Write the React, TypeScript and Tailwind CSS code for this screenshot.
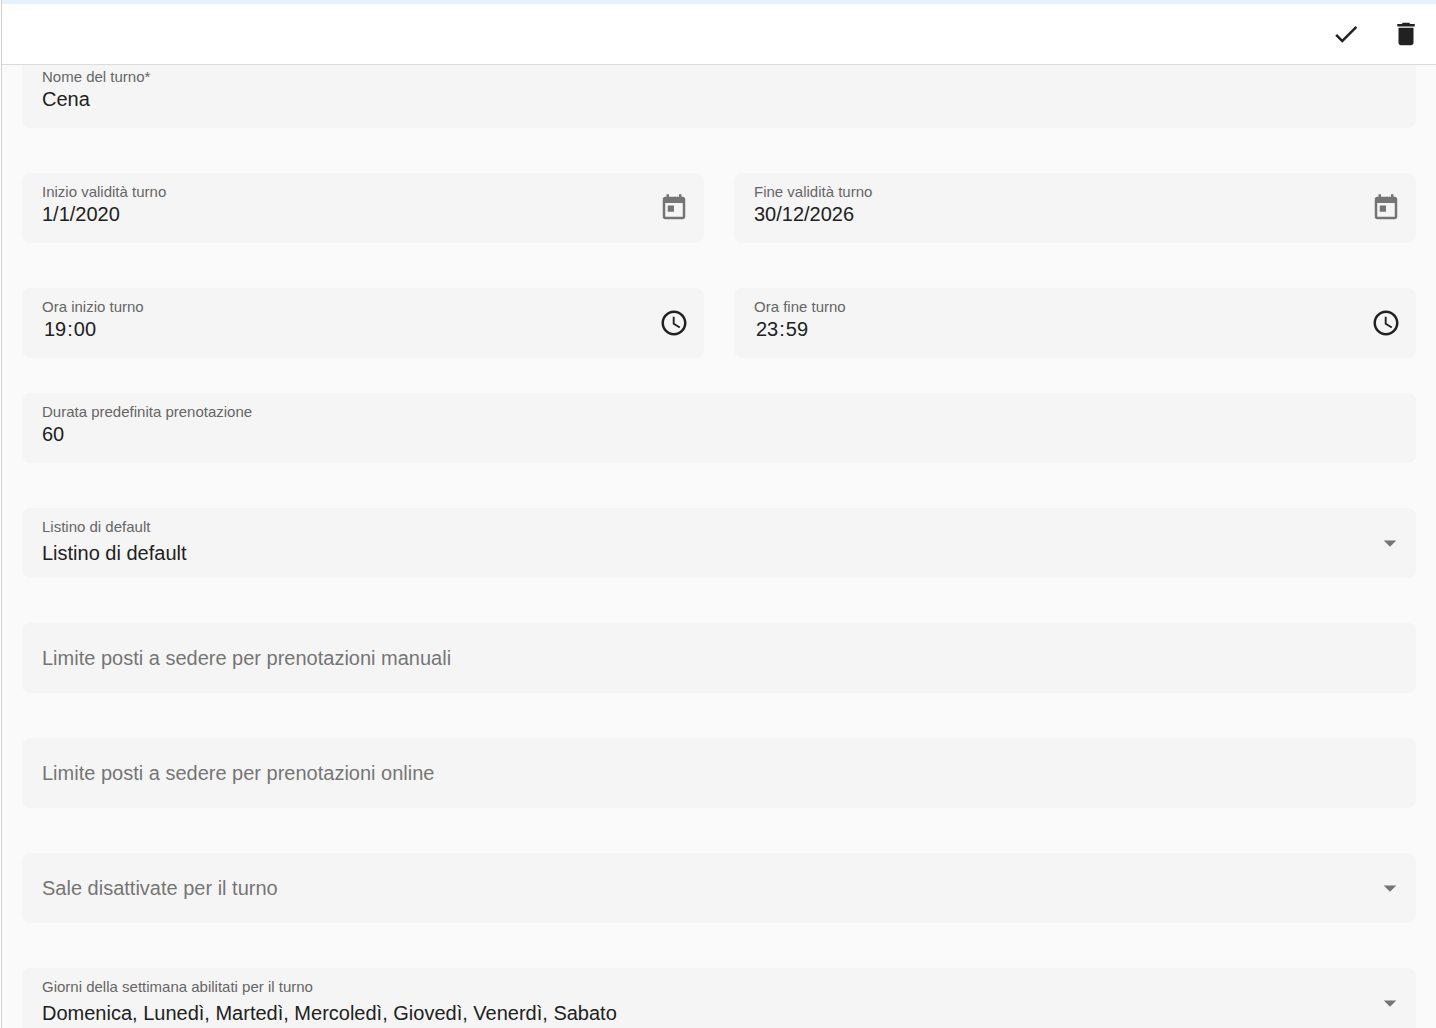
import React from 'react';

const SANS = "font-['Liberation_Sans',Arial,sans-serif]";

function Icon({ d, className }: { d: string; className: string }) {
  return (
    <svg viewBox="0 0 24 24" className={`w-[30px] h-[30px] shrink-0 fill-current ${className}`}>
      <path d={d} />
    </svg>
  );
}

const CHECK = 'M9 16.17L4.83 12l-1.42 1.41L9 19 21 7l-1.41-1.41z';
const TRASH = 'M6 19c0 1.1.9 2 2 2h8c1.1 0 2-.9 2-2V7H6v12zM19 4h-3.5l-1-1h-5l-1 1H5v2h14V4z';
const TODAY =
  'M19 3h-1V1h-2v2H8V1H6v2H5c-1.11 0-1.99.9-1.99 2L3 19c0 1.1.89 2 2 2h14c1.1 0 2-.9 2-2V5c0-1.1-.9-2-2-2zm0 16H5V8h14v11zM7 10h5v5H7z';
const CLOCK =
  'M11.99 2C6.47 2 2 6.48 2 12s4.47 10 9.99 10C17.52 22 22 17.52 22 12S17.52 2 11.99 2zM12 20c-4.42 0-8-3.58-8-8s3.58-8 8-8 8 3.58 8 8-3.58 8-8 8zm.5-13H11v6l5.25 3.15.75-1.23-4.5-2.67z';
const ARROW = 'M7 10l5 5 5-5z';

function Field({
  label,
  value,
  placeholder,
  icon,
}: {
  label?: string;
  value?: React.ReactNode;
  placeholder?: string;
  icon?: 'date' | 'time' | 'select';
}) {
  return (
    <div className="flex-1 h-[70px] bg-[#f5f5f5] rounded-[8px] flex items-center pl-5 pr-[15px] min-w-0">
      <div className="flex-1 min-w-0">
        {placeholder ? (
          <div className="text-[20px] leading-[30px] text-[#757575]">{placeholder}</div>
        ) : (
          <div className="h-[70px] pt-[10px]">
            <div className="text-[15px] leading-[18px] text-[#666666]">{label}</div>
            <div
              className={`text-[20px] leading-[26px] text-[#212121] ${
                icon === 'select' ? 'mt-[4px]' : ''
              } ${icon === 'time' ? 'pl-[2px]' : ''}`}
            >
              {value}
            </div>
          </div>
        )}
      </div>
      {icon === 'date' && <Icon d={TODAY} className="text-[#757575]" />}
      {icon === 'time' && <Icon d={CLOCK} className="text-[#212121]" />}
      {icon === 'select' && <Icon d={ARROW} className="text-[#757575] mr-[-4px]" />}
    </div>
  );
}

export default function App() {
  return (
    <div className={`h-[1028px] overflow-hidden bg-white pl-px ${SANS}`}>
      <div className="h-full border-l border-[#d0d0d0] bg-[#fafafa] flex flex-col">
        <div className="relative z-10 shrink-0 h-[65px] bg-white border-t-4 border-t-[#e3f2fd] border-b border-b-[#dcdcdc] flex justify-end items-center">
          <button className="w-[60px] h-[60px] flex items-center justify-center text-[#212121]">
            <Icon d={CHECK} className="" />
          </button>
          <button className="w-[60px] h-[60px] flex items-center justify-center text-[#212121]">
            <Icon d={TRASH} className="" />
          </button>
        </div>

        <div className="pl-5 pr-5 -mt-[7px] flex flex-col">
          <div className="flex">
            <Field label="Nome del turno*" value="Cena" />
          </div>
          <div className="flex gap-[30px] mt-[45px]">
            <Field label="Inizio validità turno" value="1/1/2020" icon="date" />
            <Field label="Fine validità turno" value="30/12/2026" icon="date" />
          </div>
          <div className="flex gap-[30px] mt-[45px]">
            <Field
              label="Ora inizio turno"
              value={<>19<span className="mx-px">:</span>00</>}
              icon="time"
            />
            <Field
              label="Ora fine turno"
              value={<>23<span className="mx-px">:</span>59</>}
              icon="time"
            />
          </div>
          <div className="flex mt-[35px]">
            <Field label="Durata predefinita prenotazione" value="60" />
          </div>
          <div className="flex mt-[45px]">
            <Field label="Listino di default" value="Listino di default" icon="select" />
          </div>
          <div className="flex mt-[45px]">
            <Field placeholder="Limite posti a sedere per prenotazioni manuali" />
          </div>
          <div className="flex mt-[45px]">
            <Field placeholder="Limite posti a sedere per prenotazioni online" />
          </div>
          <div className="flex mt-[45px]">
            <Field placeholder="Sale disattivate per il turno" icon="select" />
          </div>
          <div className="flex mt-[45px]">
            <Field
              label="Giorni della settimana abilitati per il turno"
              value="Domenica, Lunedì, Martedì, Mercoledì, Giovedì, Venerdì, Sabato"
              icon="select"
            />
          </div>
        </div>
      </div>
    </div>
  );
}
